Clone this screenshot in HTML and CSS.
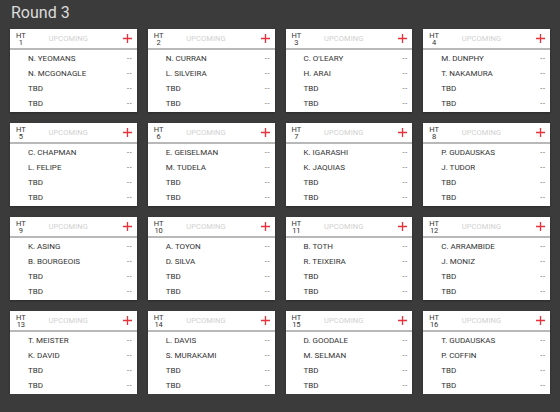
FILE: index.html
```html
<!DOCTYPE html>
<html>
<head>
<meta charset="utf-8">
<link rel="stylesheet" href="styles.css">
</head>
<body>
<h1 class="title">Round 3</h1>
<div class="grid" id="grid"></div>
<script src="app.js"></script>
</body>
</html>
```

FILE: app.js
```js
var data = [
  ["N. YEOMANS","N. MCGONAGLE"],["N. CURRAN","L. SILVEIRA"],["C. O'LEARY","H. ARAI"],["M. DUNPHY","T. NAKAMURA"],
  ["C. CHAPMAN","L. FELIPE"],["E. GEISELMAN","M. TUDELA"],["K. IGARASHI","K. JAQUIAS"],["P. GUDAUSKAS","J. TUDOR"],
  ["K. ASING","B. BOURGEOIS"],["A. TOYON","D. SILVA"],["B. TOTH","R. TEIXEIRA"],["C. ARRAMBIDE","J. MONIZ"],
  ["T. MEISTER","K. DAVID"],["L. DAVIS","S. MURAKAMI"],["D. GOODALE","M. SELMAN"],["T. GUDAUSKAS","P. COFFIN"]
];
var grid = document.getElementById('grid');
var html = '';
data.forEach(function (d, i) {
  var names = [d[0], d[1], 'TBD', 'TBD'];
  html += '<div class="card"><div class="head"><div class="heat"><span>HT</span><span>' + (i + 1) + '</span></div>' +
    '<div class="status">UPCOMING</div>' +
    '<svg class="plus" width="9" height="9" viewBox="0 0 9 9"><path d="M4.5 0V9M0 4.5H9" stroke="#e8313a" stroke-width="1.3"/></svg></div>' +
    '<ul class="rows">' + names.map(function (n) { return '<li><span class="name">' + n + '</span><span class="score">--</span></li>'; }).join('') + '</ul></div>';
});
grid.innerHTML = html;
```

FILE: styles.css
```css
html, body {
  margin: 0;
  background: #3b3b3b;
  font-family: Roboto, "Liberation Sans", sans-serif;
}
.title {
  margin: 0;
  padding: 3px 0 0 11px;
  height: 26px;
  box-sizing: border-box;
  font-size: 16px;
  font-weight: 400;
  color: #dcdcdc;
  line-height: 20px;
}
.grid {
  display: grid;
  grid-template-columns: repeat(4, 1fr);
  column-gap: 11px;
  row-gap: 11px;
  padding: 3px 10px 0 10px;
}
.card {
  background: #fff;
  height: 83px;
  box-shadow: 0 1px 2px rgba(0,0,0,0.3);
}
.head {
  height: 19px;
  border-bottom: 2px solid #b8b8b8;
  display: flex;
  align-items: center;
  padding: 0 5px 0 6px;
}
.heat {
  display: flex;
  flex-direction: column;
  align-items: center;
  font-size: 7.5px;
  line-height: 7.5px;
  color: #333;
  margin-top: 1px;
}
.status {
  flex: 1;
  text-align: center;
  font-size: 7.5px;
  color: #d0d0d0;
  letter-spacing: 0.1px;
  margin-right: 12px;
}
.plus {
  display: block;
}
.rows {
  list-style: none;
  margin: 0;
  padding: 1px 0 0 0;
}
.rows li {
  height: 15px;
  display: flex;
  align-items: center;
  justify-content: space-between;
  padding: 0 5px 0 18px;
  font-size: 8px;
  color: #333;
}
.score {
  color: #555;
  font-size: 7px;
  letter-spacing: 0.8px;
  margin-right: -0.8px;
}
```
